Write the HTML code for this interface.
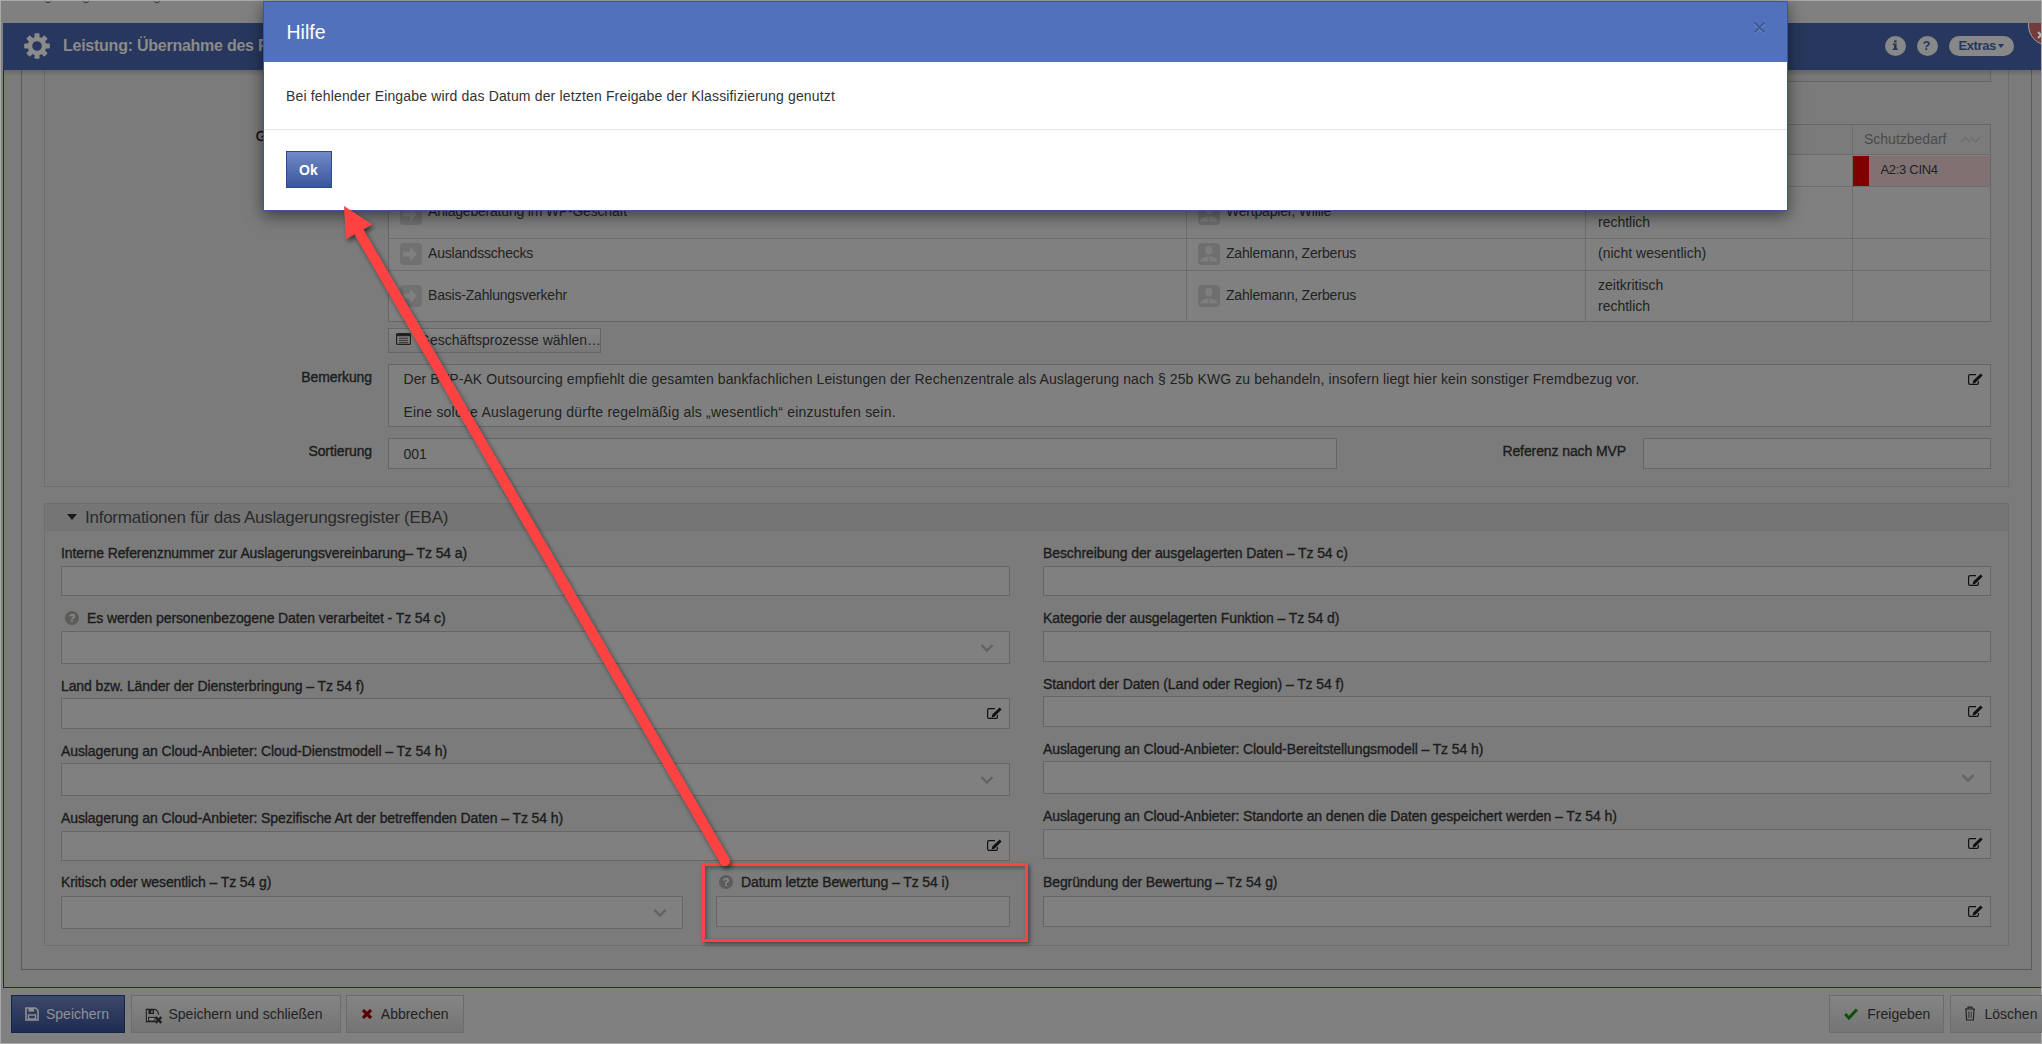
<!DOCTYPE html>
<html><head><meta charset="utf-8"><title>Hilfe</title>
<style>
html,body{margin:0;padding:0}
body{width:2042px;height:1044px;position:relative;overflow:hidden;background:#7b7b7b;font-family:"Liberation Sans",sans-serif}
body>div,body>svg{position:absolute}
.t{white-space:nowrap}
</style></head><body>
<div style="left:0px;top:0px;width:2042px;height:23px;background:#808080"></div>
<div style="left:0px;top:988px;width:2042px;height:56px;background:#808080"></div>
<div style="left:0px;top:0px;width:3px;height:1044px;background:#808080"></div>
<div style="left:2041px;top:0px;width:1px;height:1044px;background:#808080"></div>
<div style="left:0px;top:0px;width:2042px;height:1px;background:#a9a9a9"></div>
<div style="left:0px;top:0px;width:1px;height:1044px;background:#a9a9a9"></div>
<div style="left:2041px;top:0px;width:1px;height:1044px;background:#a9a9a9"></div>
<div style="left:0px;top:1043px;width:2042px;height:1px;background:#a9a9a9"></div>
<div style="left:45px;top:-1px;width:6px;height:3px;border-bottom:1px solid #333;border-radius:0 0 4px 4px"></div>
<div style="left:83px;top:-1px;width:6px;height:3px;border-bottom:1px solid #333;border-radius:0 0 4px 4px"></div>
<div style="left:154px;top:-1px;width:6px;height:3px;border-bottom:1px solid #333;border-radius:0 0 4px 4px"></div>
<div style="left:3px;top:23px;width:1px;height:965px;background:#1b2a52"></div>
<div style="left:3px;top:987px;width:2038px;height:1px;background:#1b2a52"></div>
<div style="left:3px;top:23px;width:2038px;height:47px;background:#27375d"></div>
<svg style="left:24px;top:33px" width="26" height="26" viewBox="-13 -13 26 26"><g fill="#8b8b8b"><rect x="-2.5" y="-12.8" width="5" height="6" rx="0.8" transform="rotate(0)"/><rect x="-2.5" y="-12.8" width="5" height="6" rx="0.8" transform="rotate(45)"/><rect x="-2.5" y="-12.8" width="5" height="6" rx="0.8" transform="rotate(90)"/><rect x="-2.5" y="-12.8" width="5" height="6" rx="0.8" transform="rotate(135)"/><rect x="-2.5" y="-12.8" width="5" height="6" rx="0.8" transform="rotate(180)"/><rect x="-2.5" y="-12.8" width="5" height="6" rx="0.8" transform="rotate(225)"/><rect x="-2.5" y="-12.8" width="5" height="6" rx="0.8" transform="rotate(270)"/><rect x="-2.5" y="-12.8" width="5" height="6" rx="0.8" transform="rotate(315)"/><path fill-rule="evenodd" d="M0 -9.3 A9.3 9.3 0 1 1 0 9.3 A9.3 9.3 0 1 1 0 -9.3 Z M0 -4.8 A4.8 4.8 0 1 0 0 4.8 A4.8 4.8 0 1 0 0 -4.8 Z"/></g></svg>
<div class="t " style="left:63px;top:38.46px;font-size:16px;line-height:16px;color:#8b8b8b;font-weight:bold;letter-spacing:-0.25px">Leistung: Übernahme des Rechenzentrums</div>
<div style="left:1885px;top:36px;width:21px;height:20px;border-radius:50%;background:#888888"></div>
<svg style="left:1892px;top:40px" width="7" height="11" viewBox="0 0 7 11"><rect x="2" y="0.3" width="2.6" height="2.2" fill="#27375d"/><path d="M0.8 3.6 H4.6 V8.6 H5.8 V10 H0.8 V8.6 H2 V4.9 H0.8 Z" fill="#27375d"/></svg>
<div style="left:1917px;top:36px;width:21px;height:20px;border-radius:50%;background:#888888"></div>
<div class="t " style="left:1922.5px;top:39.20px;font-size:13px;line-height:13px;color:#27375d;font-weight:bold;">?</div>
<div style="left:1949px;top:36px;width:65px;height:20px;border-radius:10px;background:#888888"></div>
<div class="t " style="left:1958.5px;top:39.20px;font-size:13px;line-height:13px;color:#27375d;font-weight:bold;letter-spacing:-0.4px">Extras</div>
<div style="left:1998px;top:44px;width:0;height:0;border-left:3.5px solid transparent;border-right:3.5px solid transparent;border-top:4.5px solid #27375d"></div>
<div style="left:2020px;top:23px;width:21px;height:30px;overflow:hidden"><div style="position:absolute;left:8px;top:-19px;width:42px;height:42px;border-radius:50%;background:#733b3b;border:1.5px solid #a0a0a0;box-sizing:border-box"></div><svg style="position:absolute;left:17px;top:8px" width="8" height="8" viewBox="0 0 8 8"><path d="M1 1L7 7M7 1L1 7" stroke="#b4b4b4" stroke-width="2"/></svg></div>
<div style="left:21px;top:70px;width:2011px;height:900px;border:1px solid #5a5a5a;border-top:none;box-sizing:border-box"></div>
<div style="left:44px;top:70px;width:1965px;height:417px;border:1px solid #6e6e6e;border-top:none;box-sizing:border-box"></div>
<div style="left:388px;top:70px;width:1603px;height:12px;border:1px solid #666666;border-top:none;background:#787878;box-sizing:border-box"></div>
<div style="left:4px;top:70px;width:2037px;height:6px;background:linear-gradient(rgba(0,0,0,0.16),rgba(0,0,0,0))"></div>
<div class="t " style="right:1668px;top:129.15px;font-size:14px;line-height:14px;color:#111;font-weight:normal;-webkit-text-stroke:0.35px #111;letter-spacing:-0.1px">Geschäftsprozesse</div>
<div style="left:388px;top:124px;width:1603px;height:198px;border:1px solid #666666;background:#808080;box-sizing:border-box"></div>
<div style="left:389px;top:125px;width:1601px;height:29px;background:#7b7b7b"></div>
<div style="left:388px;top:154px;width:1603px;height:1px;background:#6d6d6d"></div>
<div style="left:388px;top:186px;width:1603px;height:1px;background:#6d6d6d"></div>
<div style="left:388px;top:238px;width:1603px;height:1px;background:#6d6d6d"></div>
<div style="left:388px;top:270px;width:1603px;height:1px;background:#6d6d6d"></div>
<div style="left:1186px;top:125px;width:1px;height:196px;background:#6d6d6d"></div>
<div style="left:1585px;top:125px;width:1px;height:196px;background:#6d6d6d"></div>
<div style="left:1852px;top:125px;width:1px;height:196px;background:#6d6d6d"></div>
<div class="t " style="left:1864px;top:132.15px;font-size:14px;line-height:14px;color:#4a4a4a;font-weight:normal;">Schutzbedarf</div>
<svg style="left:1960px;top:135px" width="21" height="8" viewBox="0 0 21 8"><path d="M1 7 L5.5 2.5 L10 7 M11 2.5 L15.5 7 L20 2.5" fill="none" stroke="#6c6c6c" stroke-width="1.2"/></svg>
<div style="left:1853px;top:156px;width:16px;height:30px;background:#800000"></div>
<div style="left:1869px;top:156px;width:121px;height:30px;background:#807272"></div>
<div class="t " style="left:1880.5px;top:163.00px;font-size:13px;line-height:13px;color:#222222;font-weight:normal;letter-spacing:-0.3px">A2:3 CIN4</div>
<div style="left:400px;top:203px;width:22px;height:22px;border-radius:4px;background:#717171"></div>
<svg style="left:400px;top:203px" width="22" height="22" viewBox="0 0 22 22"><path d="M3 8.5 H10 V4 L17 11 L10 18 V13.5 H3 Z" fill="#808080"/></svg>
<div class="t " style="left:428px;top:204.15px;font-size:14px;line-height:14px;color:#222222;font-weight:normal;letter-spacing:-0.2px">Anlageberatung im WP-Geschäft</div>
<div style="left:1198px;top:203px;width:22px;height:22px;border-radius:4px;background:#6f6f6f"></div>
<svg style="left:1198px;top:203px" width="22" height="22" viewBox="0 0 22 22"><ellipse cx="10.8" cy="7.2" rx="3.6" ry="4.4" fill="#7e7e7e"/><path d="M1.8 18.6 C2.2 15.5 5 14.3 8.6 13.4 L10.3 13.2 L10.3 18.6 Z M19.8 18.6 C19.4 15.5 16.6 14.3 13 13.4 L11.3 13.2 L11.3 18.6 Z" fill="#7e7e7e"/></svg>
<div class="t " style="left:1226px;top:204.15px;font-size:14px;line-height:14px;color:#222222;font-weight:normal;letter-spacing:-0.2px">Wertpapier, Willie</div>
<div class="t " style="left:1598px;top:193.65px;font-size:14px;line-height:14px;color:#222222;font-weight:normal;">zeitkritisch</div>
<div class="t " style="left:1598px;top:214.85px;font-size:14px;line-height:14px;color:#222222;font-weight:normal;">rechtlich</div>
<div style="left:400px;top:243px;width:22px;height:22px;border-radius:4px;background:#717171"></div>
<svg style="left:400px;top:243px" width="22" height="22" viewBox="0 0 22 22"><path d="M3 8.5 H10 V4 L17 11 L10 18 V13.5 H3 Z" fill="#808080"/></svg>
<div class="t " style="left:428px;top:246.15px;font-size:14px;line-height:14px;color:#222222;font-weight:normal;letter-spacing:-0.2px">Auslandsschecks</div>
<div style="left:1198px;top:243px;width:22px;height:22px;border-radius:4px;background:#6f6f6f"></div>
<svg style="left:1198px;top:243px" width="22" height="22" viewBox="0 0 22 22"><ellipse cx="10.8" cy="7.2" rx="3.6" ry="4.4" fill="#7e7e7e"/><path d="M1.8 18.6 C2.2 15.5 5 14.3 8.6 13.4 L10.3 13.2 L10.3 18.6 Z M19.8 18.6 C19.4 15.5 16.6 14.3 13 13.4 L11.3 13.2 L11.3 18.6 Z" fill="#7e7e7e"/></svg>
<div class="t " style="left:1226px;top:246.15px;font-size:14px;line-height:14px;color:#222222;font-weight:normal;letter-spacing:-0.2px">Zahlemann, Zerberus</div>
<div class="t " style="left:1598px;top:246.45px;font-size:14px;line-height:14px;color:#222222;font-weight:normal;">(nicht wesentlich)</div>
<div style="left:400px;top:285px;width:22px;height:22px;border-radius:4px;background:#717171"></div>
<svg style="left:400px;top:285px" width="22" height="22" viewBox="0 0 22 22"><path d="M3 8.5 H10 V4 L17 11 L10 18 V13.5 H3 Z" fill="#808080"/></svg>
<div class="t " style="left:428px;top:288.15px;font-size:14px;line-height:14px;color:#222222;font-weight:normal;letter-spacing:-0.2px">Basis-Zahlungsverkehr</div>
<div style="left:1198px;top:285px;width:22px;height:22px;border-radius:4px;background:#6f6f6f"></div>
<svg style="left:1198px;top:285px" width="22" height="22" viewBox="0 0 22 22"><ellipse cx="10.8" cy="7.2" rx="3.6" ry="4.4" fill="#7e7e7e"/><path d="M1.8 18.6 C2.2 15.5 5 14.3 8.6 13.4 L10.3 13.2 L10.3 18.6 Z M19.8 18.6 C19.4 15.5 16.6 14.3 13 13.4 L11.3 13.2 L11.3 18.6 Z" fill="#7e7e7e"/></svg>
<div class="t " style="left:1226px;top:288.15px;font-size:14px;line-height:14px;color:#222222;font-weight:normal;letter-spacing:-0.2px">Zahlemann, Zerberus</div>
<div class="t " style="left:1598px;top:278.15px;font-size:14px;line-height:14px;color:#222222;font-weight:normal;">zeitkritisch</div>
<div class="t " style="left:1598px;top:298.65px;font-size:14px;line-height:14px;color:#222222;font-weight:normal;">rechtlich</div>
<div style="left:388px;top:328px;width:213px;height:25px;border:1px solid #666666;background:linear-gradient(#848484,#777);box-sizing:border-box"></div>
<svg style="left:396px;top:333px" width="15" height="12" viewBox="0 0 15 12"><rect x="0.6" y="0.6" width="13.8" height="10.8" rx="1" fill="none" stroke="#222" stroke-width="1.2"/><rect x="0.6" y="0.6" width="13.8" height="2.6" fill="#222"/><path d="M3 5.2H12M3 7.4H12M3 9.6H12" stroke="#333" stroke-width="1"/></svg>
<div class="t " style="left:419px;top:333.15px;font-size:14px;line-height:14px;color:#222222;font-weight:normal;">Geschäftsprozesse wählen…</div>
<div class="t " style="right:1670px;top:369.85px;font-size:14px;line-height:14px;color:#1c1c1c;font-weight:normal;-webkit-text-stroke:0.35px #1c1c1c;letter-spacing:-0.1px">Bemerkung</div>
<div style="left:388px;top:364px;width:1603px;height:63px;border:1px solid #666666;background:#808080;box-sizing:border-box"></div>
<div class="t " style="left:403.5px;top:372.15px;font-size:14px;line-height:14px;color:#222222;font-weight:normal;letter-spacing:0.1px">Der BVP-AK Outsourcing empfiehlt die gesamten bankfachlichen Leistungen der Rechenzentrale als Auslagerung nach § 25b KWG zu behandeln, insofern liegt hier kein sonstiger Fremdbezug vor.</div>
<div class="t " style="left:403.5px;top:404.85px;font-size:14px;line-height:14px;color:#222222;font-weight:normal;letter-spacing:0.2px">Eine solche Auslagerung dürfte regelmäßig als „wesentlich“ einzustufen sein.</div>
<svg style="left:1967px;top:373px" width="16" height="13" viewBox="0 0 16 13"><path d="M9 1.6 H3 Q1.6 1.6 1.6 3 V10 Q1.6 11.4 3 11.4 H10 Q11.4 11.4 11.4 10 V8" fill="none" stroke="#111" stroke-width="1.2"/><path d="M5.6 10.4 L6.3 7.6 L13.6 0.5 L15.6 2.5 L8.4 9.7 Z" fill="#111"/></svg>
<div class="t " style="right:1670px;top:444.15px;font-size:14px;line-height:14px;color:#1c1c1c;font-weight:normal;-webkit-text-stroke:0.35px #1c1c1c;letter-spacing:-0.1px">Sortierung</div>
<div style="left:388px;top:438px;width:949px;height:31px;border:1px solid #666666;background:#808080;box-sizing:border-box"></div>
<div class="t " style="left:403.5px;top:446.75px;font-size:14px;line-height:14px;color:#222222;font-weight:normal;">001</div>
<div class="t " style="right:416px;top:444.15px;font-size:14px;line-height:14px;color:#1c1c1c;font-weight:normal;-webkit-text-stroke:0.35px #1c1c1c;letter-spacing:-0.1px">Referenz nach MVP</div>
<div style="left:1643px;top:438px;width:348px;height:31px;border:1px solid #666666;background:#808080;box-sizing:border-box"></div>
<div style="left:44px;top:503px;width:1965px;height:443px;border:1px solid #6e6e6e;box-sizing:border-box"></div>
<div style="left:45px;top:504px;width:1963px;height:27px;background:#757575;border-bottom:1px solid #707070;box-sizing:border-box"></div>
<div style="left:67px;top:514px;width:0;height:0;border-left:5.5px solid transparent;border-right:5.5px solid transparent;border-top:6.5px solid #1a1a1a"></div>
<div class="t " style="left:85px;top:508.61px;font-size:17px;line-height:17px;color:#2a2a2a;font-weight:normal;letter-spacing:-0.25px">Informationen für das Auslagerungsregister (EBA)</div>
<div class="t " style="left:61px;top:546.35px;font-size:14px;line-height:14px;color:#1c1c1c;font-weight:normal;-webkit-text-stroke:0.35px #1c1c1c;letter-spacing:-0.1px">Interne Referenznummer zur Auslagerungsvereinbarung– Tz 54 a)</div>
<div style="left:61px;top:566px;width:949px;height:30px;border:1px solid #666666;background:#808080;box-sizing:border-box"></div>
<div class="t " style="left:1043px;top:546.35px;font-size:14px;line-height:14px;color:#1c1c1c;font-weight:normal;-webkit-text-stroke:0.35px #1c1c1c;letter-spacing:-0.1px">Beschreibung der ausgelagerten Daten – Tz 54 c)</div>
<div style="left:1043px;top:566px;width:948px;height:30px;border:1px solid #666666;background:#808080;box-sizing:border-box"></div>
<svg style="left:1967px;top:574px" width="16" height="13" viewBox="0 0 16 13"><path d="M9 1.6 H3 Q1.6 1.6 1.6 3 V10 Q1.6 11.4 3 11.4 H10 Q11.4 11.4 11.4 10 V8" fill="none" stroke="#111" stroke-width="1.2"/><path d="M5.6 10.4 L6.3 7.6 L13.6 0.5 L15.6 2.5 L8.4 9.7 Z" fill="#111"/></svg>
<div style="left:65px;top:610.8px;width:14px;height:14px;border-radius:50%;background:#5c5c5c"></div>
<div class="t " style="left:68.8px;top:612.69px;font-size:11px;line-height:11px;color:#8e8e8e;font-weight:bold;">?</div>
<div class="t " style="left:87px;top:610.95px;font-size:14px;line-height:14px;color:#1c1c1c;font-weight:normal;-webkit-text-stroke:0.35px #1c1c1c;letter-spacing:-0.1px">Es werden personenbezogene Daten verarbeitet - Tz 54 c)</div>
<div style="left:61px;top:631px;width:949px;height:33px;border:1px solid #666666;background:#808080;box-sizing:border-box"></div>
<svg style="left:980px;top:642.5px" width="14" height="10" viewBox="0 0 14 10"><path d="M1.5 2 L7 7.5 L12.5 2" fill="none" stroke="#626262" stroke-width="2.3"/></svg>
<div class="t " style="left:1043px;top:610.95px;font-size:14px;line-height:14px;color:#1c1c1c;font-weight:normal;-webkit-text-stroke:0.35px #1c1c1c;letter-spacing:-0.1px">Kategorie der ausgelagerten Funktion – Tz 54 d)</div>
<div style="left:1043px;top:631px;width:948px;height:31px;border:1px solid #666666;background:#808080;box-sizing:border-box"></div>
<div class="t " style="left:61px;top:678.95px;font-size:14px;line-height:14px;color:#1c1c1c;font-weight:normal;-webkit-text-stroke:0.35px #1c1c1c;letter-spacing:-0.1px">Land bzw. Länder der Diensterbringung – Tz 54 f)</div>
<div style="left:61px;top:698px;width:949px;height:31px;border:1px solid #666666;background:#808080;box-sizing:border-box"></div>
<svg style="left:986px;top:707px" width="16" height="13" viewBox="0 0 16 13"><path d="M9 1.6 H3 Q1.6 1.6 1.6 3 V10 Q1.6 11.4 3 11.4 H10 Q11.4 11.4 11.4 10 V8" fill="none" stroke="#111" stroke-width="1.2"/><path d="M5.6 10.4 L6.3 7.6 L13.6 0.5 L15.6 2.5 L8.4 9.7 Z" fill="#111"/></svg>
<div class="t " style="left:1043px;top:677.05px;font-size:14px;line-height:14px;color:#1c1c1c;font-weight:normal;-webkit-text-stroke:0.35px #1c1c1c;letter-spacing:-0.1px">Standort der Daten (Land oder Region) – Tz 54 f)</div>
<div style="left:1043px;top:696px;width:948px;height:31px;border:1px solid #666666;background:#808080;box-sizing:border-box"></div>
<svg style="left:1967px;top:705px" width="16" height="13" viewBox="0 0 16 13"><path d="M9 1.6 H3 Q1.6 1.6 1.6 3 V10 Q1.6 11.4 3 11.4 H10 Q11.4 11.4 11.4 10 V8" fill="none" stroke="#111" stroke-width="1.2"/><path d="M5.6 10.4 L6.3 7.6 L13.6 0.5 L15.6 2.5 L8.4 9.7 Z" fill="#111"/></svg>
<div class="t " style="left:61px;top:743.95px;font-size:14px;line-height:14px;color:#1c1c1c;font-weight:normal;-webkit-text-stroke:0.35px #1c1c1c;letter-spacing:-0.1px">Auslagerung an Cloud-Anbieter: Cloud-Dienstmodell – Tz 54 h)</div>
<div style="left:61px;top:763px;width:949px;height:33px;border:1px solid #666666;background:#808080;box-sizing:border-box"></div>
<svg style="left:980px;top:774.5px" width="14" height="10" viewBox="0 0 14 10"><path d="M1.5 2 L7 7.5 L12.5 2" fill="none" stroke="#626262" stroke-width="2.3"/></svg>
<div class="t " style="left:1043px;top:742.15px;font-size:14px;line-height:14px;color:#1c1c1c;font-weight:normal;-webkit-text-stroke:0.35px #1c1c1c;letter-spacing:-0.1px">Auslagerung an Cloud-Anbieter: Clould-Bereitstellungsmodell – Tz 54 h)</div>
<div style="left:1043px;top:761px;width:948px;height:33px;border:1px solid #666666;background:#808080;box-sizing:border-box"></div>
<svg style="left:1961px;top:772.5px" width="14" height="10" viewBox="0 0 14 10"><path d="M1.5 2 L7 7.5 L12.5 2" fill="none" stroke="#626262" stroke-width="2.3"/></svg>
<div class="t " style="left:61px;top:811.15px;font-size:14px;line-height:14px;color:#1c1c1c;font-weight:normal;-webkit-text-stroke:0.35px #1c1c1c;letter-spacing:-0.1px">Auslagerung an Cloud-Anbieter: Spezifische Art der betreffenden Daten – Tz 54 h)</div>
<div style="left:61px;top:831px;width:949px;height:30px;border:1px solid #666666;background:#808080;box-sizing:border-box"></div>
<svg style="left:986px;top:839px" width="16" height="13" viewBox="0 0 16 13"><path d="M9 1.6 H3 Q1.6 1.6 1.6 3 V10 Q1.6 11.4 3 11.4 H10 Q11.4 11.4 11.4 10 V8" fill="none" stroke="#111" stroke-width="1.2"/><path d="M5.6 10.4 L6.3 7.6 L13.6 0.5 L15.6 2.5 L8.4 9.7 Z" fill="#111"/></svg>
<div class="t " style="left:1043px;top:809.45px;font-size:14px;line-height:14px;color:#1c1c1c;font-weight:normal;-webkit-text-stroke:0.35px #1c1c1c;letter-spacing:-0.1px">Auslagerung an Cloud-Anbieter: Standorte an denen die Daten gespeichert werden – Tz 54 h)</div>
<div style="left:1043px;top:829px;width:948px;height:30px;border:1px solid #666666;background:#808080;box-sizing:border-box"></div>
<svg style="left:1967px;top:837px" width="16" height="13" viewBox="0 0 16 13"><path d="M9 1.6 H3 Q1.6 1.6 1.6 3 V10 Q1.6 11.4 3 11.4 H10 Q11.4 11.4 11.4 10 V8" fill="none" stroke="#111" stroke-width="1.2"/><path d="M5.6 10.4 L6.3 7.6 L13.6 0.5 L15.6 2.5 L8.4 9.7 Z" fill="#111"/></svg>
<div class="t " style="left:61px;top:875.45px;font-size:14px;line-height:14px;color:#1c1c1c;font-weight:normal;-webkit-text-stroke:0.35px #1c1c1c;letter-spacing:-0.1px">Kritisch oder wesentlich – Tz 54 g)</div>
<div style="left:61px;top:896px;width:622px;height:33px;border:1px solid #666666;background:#808080;box-sizing:border-box"></div>
<svg style="left:653px;top:907.5px" width="14" height="10" viewBox="0 0 14 10"><path d="M1.5 2 L7 7.5 L12.5 2" fill="none" stroke="#626262" stroke-width="2.3"/></svg>
<div style="left:719px;top:875.3px;width:14px;height:14px;border-radius:50%;background:#5c5c5c"></div>
<div class="t " style="left:722.8px;top:877.19px;font-size:11px;line-height:11px;color:#8e8e8e;font-weight:bold;">?</div>
<div class="t " style="left:741px;top:875.45px;font-size:14px;line-height:14px;color:#1c1c1c;font-weight:normal;-webkit-text-stroke:0.35px #1c1c1c;letter-spacing:-0.1px">Datum letzte Bewertung – Tz 54 i)</div>
<div style="left:716px;top:896px;width:294px;height:31px;border:1px solid #666666;background:#808080;box-sizing:border-box"></div>
<div class="t " style="left:1043px;top:875.45px;font-size:14px;line-height:14px;color:#1c1c1c;font-weight:normal;-webkit-text-stroke:0.35px #1c1c1c;letter-spacing:-0.1px">Begründung der Bewertung – Tz 54 g)</div>
<div style="left:1043px;top:896px;width:948px;height:31px;border:1px solid #666666;background:#808080;box-sizing:border-box"></div>
<svg style="left:1967px;top:905px" width="16" height="13" viewBox="0 0 16 13"><path d="M9 1.6 H3 Q1.6 1.6 1.6 3 V10 Q1.6 11.4 3 11.4 H10 Q11.4 11.4 11.4 10 V8" fill="none" stroke="#111" stroke-width="1.2"/><path d="M5.6 10.4 L6.3 7.6 L13.6 0.5 L15.6 2.5 L8.4 9.7 Z" fill="#111"/></svg>
<div style="left:11px;top:995px;width:114px;height:38px;border:1px solid #17244a;background:linear-gradient(#3b4869,#1f2c52);box-sizing:border-box"></div>
<svg style="left:25px;top:1007px" width="14" height="14" viewBox="0 0 14 14"><path d="M1 1 H10.5 L13 3.5 V13 H1 Z" fill="none" stroke="#909196" stroke-width="1.6"/><rect x="3.5" y="1" width="5.5" height="3.5" fill="#909196"/><rect x="3.5" y="8" width="7" height="4" fill="none" stroke="#909196" stroke-width="1.4"/></svg>
<div class="t " style="left:46px;top:1007.15px;font-size:14px;line-height:14px;color:#909196;font-weight:normal;">Speichern</div>
<div style="left:131px;top:995px;width:210px;height:38px;border:1px solid #6c6c6c;background:linear-gradient(#858585,#747474);box-sizing:border-box"></div>
<svg style="left:145px;top:1008px" width="19" height="17" viewBox="0 0 19 17"><path d="M10 13.6 H1.35 V1.35 H9.6 C11.5 2 13.3 4 13.6 6.7" fill="none" stroke="#1e1e1e" stroke-width="1.1"/><rect x="3.5" y="2" width="5.5" height="4" fill="#1e1e1e"/><rect x="6.2" y="2.5" width="1.4" height="2.2" fill="#858585"/><rect x="3.6" y="9.4" width="6.4" height="3.6" fill="#8a8a8a" stroke="#1e1e1e" stroke-width="1"/><path d="M10.8 9 L16.3 14.8 M16.3 9 L10.8 14.8" stroke="#1e1e1e" stroke-width="2.4"/></svg>
<div class="t " style="left:168.5px;top:1007.15px;font-size:14px;line-height:14px;color:#222;font-weight:normal;">Speichern und schließen</div>
<div style="left:346px;top:995px;width:118px;height:38px;border:1px solid #6c6c6c;background:linear-gradient(#858585,#747474);box-sizing:border-box"></div>
<svg style="left:362px;top:1009px" width="10" height="10" viewBox="0 0 10 10"><path d="M1 1 L9 9 M9 1 L1 9" stroke="#580000" stroke-width="3.1"/></svg>
<div class="t " style="left:380.8px;top:1007.15px;font-size:14px;line-height:14px;color:#222;font-weight:normal;">Abbrechen</div>
<div style="left:1829px;top:995px;width:115px;height:38px;border:1px solid #6c6c6c;background:linear-gradient(#858585,#747474);box-sizing:border-box"></div>
<svg style="left:1844px;top:1008px" width="14" height="12" viewBox="0 0 14 12"><path d="M1.2 6 L5 10 L12.8 1.5" fill="none" stroke="#0b4f0b" stroke-width="3"/></svg>
<div class="t " style="left:1867.3px;top:1007.15px;font-size:14px;line-height:14px;color:#222;font-weight:normal;">Freigeben</div>
<div style="left:1950px;top:995px;width:110px;height:38px;border:1px solid #6c6c6c;background:linear-gradient(#858585,#747474);box-sizing:border-box"></div>
<svg style="left:1964px;top:1006px" width="12" height="15" viewBox="0 0 12 15"><path d="M1 3 H11 M4 3 V1.2 H8 V3 M2 3 L2.6 14 H9.4 L10 3" fill="none" stroke="#222" stroke-width="1.2"/><path d="M4.5 5.5V12M6 5.5V12M7.5 5.5V12" stroke="#444" stroke-width="0.9"/></svg>
<div class="t " style="left:1984.5px;top:1007.15px;font-size:14px;line-height:14px;color:#222;font-weight:normal;">Löschen</div>
<div style="left:702px;top:863px;width:326px;height:79px;border:3px solid #fe4343;box-sizing:border-box;box-shadow:2px 2px 4px rgba(0,0,0,0.45), inset 2px 2px 4px rgba(0,0,0,0.35)"></div>
<div style="left:263px;top:1px;width:1525px;height:210px;background:#fff;border:1px solid #3c55a0;box-sizing:border-box;box-shadow:0 5px 15px rgba(0,0,0,0.5)"></div>
<div style="left:264px;top:2px;width:1523px;height:60px;background:#5171bc"></div>
<div class="t " style="left:286.5px;top:23.49px;font-size:19.5px;line-height:19.5px;color:#fff;font-weight:normal;">Hilfe</div>
<svg style="left:1753px;top:21px" width="13" height="14" viewBox="0 0 13 14"><path d="M1.5 2.5 L11.5 12.5 M11.5 2.5 L1.5 12.5" stroke="#7890cc" stroke-width="2"/><path d="M1.5 1.5 L11.5 11.5 M11.5 1.5 L1.5 11.5" stroke="#3e5999" stroke-width="2"/></svg>
<div class="t " style="left:286px;top:88.75px;font-size:14px;line-height:14px;color:#333;font-weight:normal;letter-spacing:0.16px">Bei fehlender Eingabe wird das Datum der letzten Freigabe der Klassifizierung genutzt</div>
<div style="left:264px;top:129px;width:1523px;height:1px;background:#e5e5e5"></div>
<div style="left:286px;top:151px;width:46px;height:37px;border:1px solid #2f4a8c;background:linear-gradient(#7189c8,#3a569a);box-sizing:border-box"></div>
<div class="t " style="left:299px;top:163.15px;font-size:14px;line-height:14px;color:#fff;font-weight:bold;">Ok</div>
<svg style="left:0;top:0" width="2042" height="1044" viewBox="0 0 2042 1044">
<defs><filter id="sh" x="-10%" y="-10%" width="120%" height="120%"><feGaussianBlur in="SourceAlpha" stdDeviation="2.5"/><feOffset dx="2" dy="3"/><feComponentTransfer><feFuncA type="linear" slope="0.55"/></feComponentTransfer><feMerge><feMergeNode/><feMergeNode in="SourceGraphic"/></feMerge></filter></defs>
<g filter="url(#sh)" fill="#fe4343">
<path d="M725 861 L359 232" stroke="#fe4343" stroke-width="10" stroke-linecap="round" fill="none"/>
<path d="M344 206 L346 239 L372 224.5 Z"/>
</g></svg>
</body></html>
